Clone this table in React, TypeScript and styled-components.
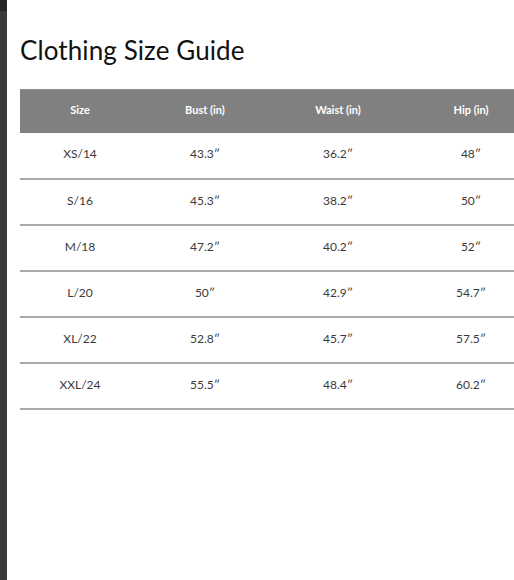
import React from "react";
import styled, { createGlobalStyle } from "styled-components";

const GlobalStyle = createGlobalStyle`
  html, body {
    margin: 0;
    padding: 0;
    overflow: hidden;
    background: #ffffff;
  }
`;

const Page = styled.div`
  display: flex;
  width: 514px;
  height: 580px;
  overflow: hidden;
`;

const Backdrop = styled.div`
  flex: 0 0 7px;
  background: #3a3a3a;
  border-top: 11px solid #242424;
  box-sizing: border-box;
`;

const Modal = styled.div`
  flex: 1;
  background: #ffffff;
  padding: 34px 0 0 13px;
  overflow: hidden;
`;

const Title = styled.h1`
  margin: 0 0 23px 0;
  font-family: Lato, "Noto Sans", sans-serif;
  font-weight: 400;
  font-size: 26px;
  line-height: 32px;
  color: #111111;
  letter-spacing: 0.1px;
`;

const Table = styled.table`
  width: 516px;
  table-layout: fixed;
  border-collapse: collapse;
  font-family: Lato, "Noto Sans", sans-serif;
`;

const HeadCell = styled.th<{ $w: number }>`
  box-sizing: border-box;
  width: ${(p) => p.$w}px;
  height: 43px;
  padding: 0 0 3px;
  background: #808080;
  color: #ffffff;
  font-size: 11px;
  font-weight: 700;
  text-align: center;
  border-top: 1px solid #8c8c8c;
`;

const Row = styled.tr`
  border-bottom: 2px solid #a9a9a9;
`;

const Cell = styled.td`
  box-sizing: border-box;
  height: 46px;
  padding: 0 0 3px;
  text-align: center;
  font-size: 12px;
  color: #3a3a3a;
`;

const columns = [
  { label: "Size", width: 120 },
  { label: "Bust (in)", width: 130 },
  { label: "Waist (in)", width: 136 },
  { label: "Hip (in)", width: 130 },
];

const rows = [
  ["XS/14", "43.3″", "36.2″", "48″"],
  ["S/16", "45.3″", "38.2″", "50″"],
  ["M/18", "47.2″", "40.2″", "52″"],
  ["L/20", "50″", "42.9″", "54.7″"],
  ["XL/22", "52.8″", "45.7″", "57.5″"],
  ["XXL/24", "55.5″", "48.4″", "60.2″"],
];

export default function App() {
  return (
    <>
      <GlobalStyle />
      <Page>
        <Backdrop />
        <Modal>
          <Title>Clothing Size Guide</Title>
          <Table>
            <thead>
              <tr>
                {columns.map((c) => (
                  <HeadCell key={c.label} $w={c.width}>
                    {c.label}
                  </HeadCell>
                ))}
              </tr>
            </thead>
            <tbody>
              {rows.map((r) => (
                <Row key={r[0]}>
                  {r.map((v, i) => (
                    <Cell key={i}>{v}</Cell>
                  ))}
                </Row>
              ))}
            </tbody>
          </Table>
        </Modal>
      </Page>
    </>
  );
}
